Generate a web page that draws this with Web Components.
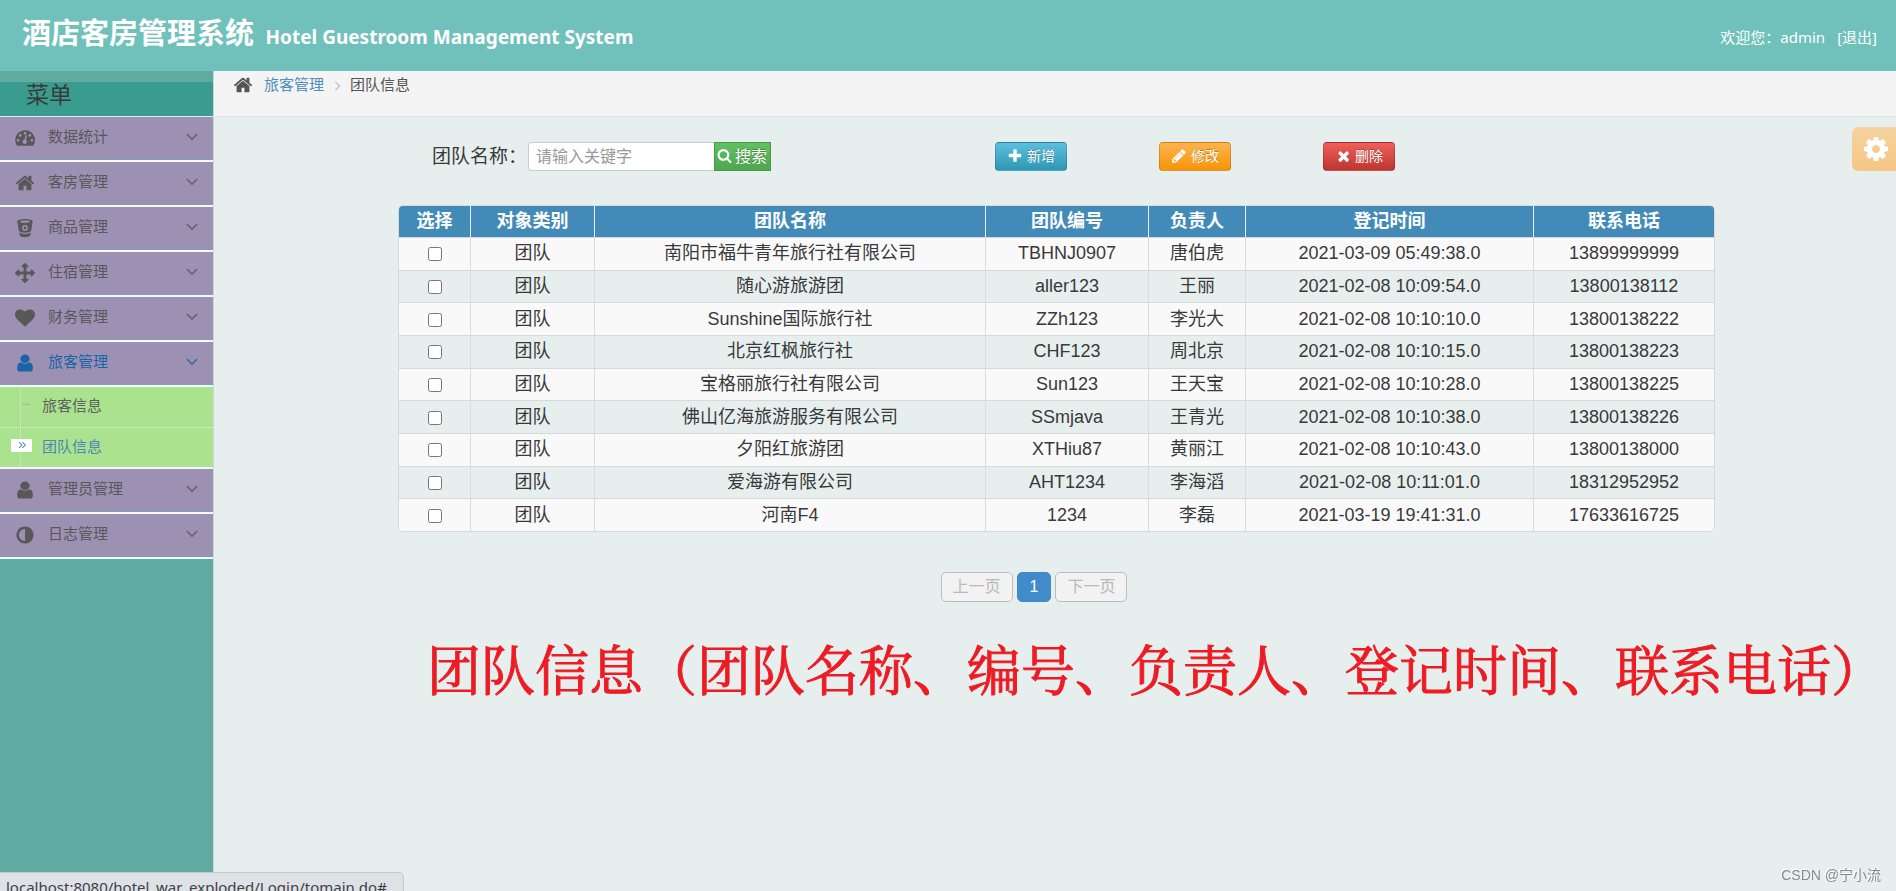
<!DOCTYPE html>
<html lang="zh-CN">
<head>
<meta charset="utf-8">
<title>酒店客房管理系统</title>
<style>
html, body { margin: 0; height: 100%; }
body { font-family: "Liberation Sans", "Noto Sans CJK SC", sans-serif; font-size: 15px; color: #393939; background: #e6efee; }
</style>
</head>
<body>
<hotel-app></hotel-app>
<script>
const ICONS = {
  home: ['0 0 1664 1792', 'M1408 992v480q0 26-19 45t-45 19h-384v-384h-256v384h-384q-26 0-45-19t-19-45v-480q0-1 .5-3t.5-3l575-474 575 474q1 2 1 6zm223-69l-62 74q-8 9-21 11h-3q-13 0-21-7l-692-577-692 577q-12 8-24 7-13-2-21-11l-62-74q-8-10-7-23.5t11-21.5l719-599q32-26 76-26t76 26l244 204v-195q0-14 9-23t23-9h192q14 0 23 9t9 23v408l219 182q10 8 11 21.5t-7 23.5z'],
  dashboard: ['0 0 20 20', 'M10 2.2A9.8 9.8 0 0 0 .2 12c0 2 .6 3.800 1.500 5.300.2.300.5.500.9.500h14.800c.4 0 .7-.2.900-.5A9.800 9.800 0 0 0 10 2.200zM3.100 10.900a1.400 1.400 0 1 1 0 2.800 1.400 1.400 0 0 1 0-2.800zM5.200 6a1.400 1.400 0 1 1 0 2.800 1.400 1.400 0 0 1 0-2.800zM10 3.900a1.400 1.400 0 1 1 0 2.800 1.400 1.400 0 0 1 0-2.800zM14.800 6a1.400 1.400 0 1 1 0 2.800 1.400 1.400 0 0 1 0-2.800zM16.900 10.900a1.400 1.400 0 1 1 0 2.800 1.400 1.400 0 0 1 0-2.800zM11.900 7.400l-.9 4.600a2.200 2.200 0 1 1-1.500-.4l1.100-4.500z'],
  bucket: ['0 0 20 20', 'M10 1C5.500 1 2.200 2.100 2.300 3.600l1.500 9.100c.8 1.300 3.300 2 6.200 2s5.400-.7 6.200-2l1.500-9.100C17.800 2.100 14.500 1 10 1zm0 1.600c2.700 0 4.900.5 4.900 1.100S12.700 4.800 10 4.800s-4.900-.5-4.900-1.100S7.300 2.600 10 2.600zM10 7a2.900 2.900 0 1 1 0 5.800A2.900 2.900 0 0 1 10 7zm0 1.500a1.400 1.400 0 1 0 0 2.800 1.400 1.400 0 0 0 0-2.800zM4.100 14.600l.7 3c.6 1.100 2.800 1.700 5.200 1.700s4.600-.6 5.200-1.700l.7-3c-1.300.9-3.400 1.400-5.900 1.400s-4.600-.5-5.900-1.400z'],
  arrows: ['0 0 1792 1792', 'M1792 896q0 26-19 45l-256 256q-19 19-45 19t-45-19-19-45v-128h-384v384h128q26 0 45 19t19 45-19 45l-256 256q-19 19-45 19t-45-19l-256-256q-19-19-19-45t19-45 45-19h128v-384h-384v128q0 26-19 45t-45 19-45-19l-256-256q-19-19-19-45t19-45l256-256q19-19 45-19t45 19 19 45v128h384v-384h-128q-26 0-45-19t-19-45 19-45l256-256q19-19 45-19t45 19l256 256q19 19 19 45t-19 45-45 19h-128v384h384v-128q0-26 19-45t45-19 45 19l256 256q19 19 19 45z'],
  heart: ['0 0 1792 1792', 'M896 1664q-26 0-44-18l-624-602q-10-8-27.5-26t-55.5-65.5-68-97.5-53.5-121-23.5-138q0-220 127-344t351-124q62 0 126.5 21.5t120 58 95.5 68.5 76 68q36-36 76-68t95.5-68.5 120-58 126.5-21.5q224 0 351 124t127 344q0 221-229 450l-623 600q-18 18-44 18z'],
  user: ['0 0 1792 1792', 'M1600 1399q0 109-62.5 187t-150.5 78h-982q-88 0-150.5-78t-62.500-187q0-85 8.500-160.500t31.500-152 58.500-131 94-89 134.500-34.500q131 128 377 128t377-128q76 0 134.500 34.500t94 89 58.500 131 31.500 152 8.500 160.500zm-288-887q0 159-122 271.500t-294 112.500-294-112.500-122-271.500 122-271.500 294-112.500 294 112.500 122 271.500z'],
  adjust: ['0 0 1792 1792', 'M896 1440v-1088q-148 0-273 73t-198 198-73 273 73 273 198 198 273 73zm768-544q0 209-103 385.500t-279.500 279.500-385.500 103-385.500-103-279.500-279.500-103-385.500 103-385.500 279.500-279.500 385.500-103 385.500 103 279.500 279.500 103 385.500z'],
  search: ['0 0 1792 1792', 'M1216 832q0-185-131.500-316.500t-316.500-131.500-316.500 131.500-131.500 316.500 131.500 316.500 316.500 131.500 316.500-131.500 131.500-316.500zm512 832q0 52-38 90t-90 38q-54 0-90-38l-343-342q-179 124-399 124-143 0-273.500-55.500t-225-150-150-225-55.500-273.500 55.500-273.500 150-225 225-150 273.500-55.500 273.500 55.500 225 150 150 225 55.500 273.500q0 220-124 399l343 343q37 37 37 90z'],
  plus: ['0 0 1792 1792', 'M1600 736v192q0 40-28 68t-68 28h-416v416q0 40-28 68t-68 28h-192q-40 0-68-28t-28-68v-416h-416q-40 0-68-28t-28-68v-192q0-40 28-68t68-28h416v-416q0-40 28-68t68-28h192q40 0 68 28t28 68v416h416q40 0 68 28t28 68z'],
  pencil: ['0 0 1792 1792', 'M491 1536l91-91-235-235-91 91v107h128v128h107zm523-928q0-22-22-22-10 0-17 7l-542 542q-7 7-7 17 0 22 22 22 10 0 17-7l542-542q7-7 7-17zm-54-192l416 416-832 832h-416v-416zm683 96q0 53-37 90l-166 166-416-416 166-165q36-38 90-38 53 0 91 38l235 234q37 39 37 91z'],
  times: ['0 0 1792 1792', 'M1562 1322q0 40-28 68l-136 136q-28 28-68 28t-68-28l-294-294-294 294q-28 28-68 28t-68-28l-136-136q-28-28-28-68t28-68l294-294-294-294q-28-28-28-68t28-68l136-136q28-28 68-28t68 28l294 294 294-294q28-28 68-28t68 28l136 136q28 28 28 68t-28 68l-294 294 294 294q28 28 28 68z'],
  cog: ['0 0 1792 1792', 'M1152 896q0-106-75-181t-181-75-181 75-75 181 75 181 181 75 181-75 75-181zm512-109v222q0 12-8 23t-20 13l-185 28q-19 54-39 91 35 50 107 138 10 12 10 25t-9 23q-27 37-99 108t-94 71q-12 0-26-9l-138-108q-44 23-91 38-16 136-29 186-7 28-36 28h-222q-14 0-24.500-8.500t-11.500-21.500l-28-184q-49-16-90-37l-141 107q-10 9-25 9-14 0-25-11-126-114-165-168-7-10-7-23 0-12 8-23 15-21 51-66.500t54-70.500q-27-50-41-99l-183-27q-13-2-21-12.500t-8-23.500v-222q0-12 8-23t19-13l186-28q14-46 39-92-40-57-107-138-10-12-10-24 0-10 9-23 26-36 98.500-107.500t94.500-71.500q13 0 26 10l138 107q44-23 91-38 16-136 29-186 7-28 36-28h222q14 0 24.500 8.500t11.500 21.500l28 184q49 16 90 37l142-107q9-9 24-9 13 0 25 10 129 119 165 170 7 8 7 22 0 12-8 23-15 21-51 66.500t-54 70.500q26 50 41 98l183 28q13 2 21 12.500t8 23.500z'],
  down: ['0 0 12 12', 'M1.400 2.400L6 7l4.600-4.600 1.100 1.100L6 9.200.3 3.500z'],
  right: ['0 0 12 12', 'M3.600 1.400L8.200 6l-4.600 4.600.9.900L10 6 4.500.5z'],
  double: ['0 0 12 12', 'M1.200 2.100L5 6 1.200 9.900l1 1L7 6 2.200 1.100zM6.200 2.100L10 6 6.200 9.900l1 1L12 6 7.200 1.100z']
};

function define(name, html) {
  const template = document.createElement('template');
  customElements.define(name, class extends HTMLElement {
    constructor() {
      super();
      template.innerHTML = typeof html === 'function' ? html(this) : html;
      this.attachShadow({ mode: 'open' }).append(template.content.cloneNode(true));
    }
  });
}

define('ui-icon', el => {
  const [box, path] = ICONS[el.getAttribute('name')];
  return `<style>
    :host { display: inline-block; flex: none; width: 20px; height: 20px; }
    svg { display: block; width: 100%; height: 100%; fill: currentColor; fill-rule: evenodd; }
  </style><svg viewBox="${box}" aria-hidden="true"><path d="${path}"/></svg>`;
});

define('app-header', `<style>
  :host { display: flex; justify-content: space-between; align-items: center; height: 71px; padding: 0 19px 0 22px; box-sizing: border-box; background: #70c1bb; color: #fff; font-family: "Noto Sans", "Noto Sans CJK SC", sans-serif; }
  h1 { margin: 0; padding-bottom: 2px; font-size: 29px; line-height: 40px; font-weight: 700; }
  small { margin-left: 4px; font-size: 19px; }
  .user { display: flex; gap: 12px; padding-top: 2px; font-size: 15px; line-height: 20px; }
  a { color: inherit; text-decoration: none; }
</style>
<h1>酒店客房管理系统 <small>Hotel Guestroom Management System</small></h1>
<div class="user"><span>欢迎您：admin</span><a href="#">[退出]</a></div>`);

define('menu-group', el => `<style>
  :host { display: block; color: #585858; border-bottom: 2px solid #f4faf8; }
  :host([active]) { color: #1963aa; }
  a { display: flex; align-items: center; height: 43px; box-sizing: border-box; padding: 0 15px; background: #9d91b3; color: inherit; text-decoration: none; border-bottom: 1px solid #7f9fae; }
  span { flex: 1; padding: 0 0 3px 13px; line-height: 20px; }
  ui-icon.chev { width: 12px; height: 12px; padding-bottom: 3px; opacity: .8; }
  ::slotted(*) { border-top: 2px solid #f4faf8; }
</style>
<a href="#"><ui-icon name="${el.getAttribute('icon')}"></ui-icon><span>${el.getAttribute('label')}</span><ui-icon class="chev" name="down"></ui-icon></a><slot></slot>`);

define('sub-menu', `<style>
  :host { display: block; background: #abe28e; }
  ul { list-style: none; margin: 0; padding: 0; background: linear-gradient(90deg, transparent 20px, #cdddc8 20px, #cdddc8 21px, transparent 21px); }
  a { display: flex; align-items: center; height: 40px; box-sizing: border-box; padding: 0 0 5px 11px; color: #616161; text-decoration: none; }
  li + li a { border-top: 1px dotted #e8f4e2; color: #4b88b7; }
  i { width: 21px; margin-right: 10px; display: flex; justify-content: center; align-items: center; }
  .tick::after { content: ""; width: 8px; height: 1px; margin-left: 8px; background: #9db99a; }
  .mark { height: 13px; background: #fff; }
  ui-icon { width: 8px; height: 8px; }
</style>
<ul><li><a href="#"><i class="tick"></i>旅客信息</a></li>
<li><a href="#"><i class="mark"><ui-icon name="double"></ui-icon></i>团队信息</a></li></ul>`);

define('side-menu', `<style>
  :host { display: block; width: 213px; flex: none; background: #5faaa1; border-right: 1px solid #ccd6d5; }
  h2 { margin: 11px 0 0; height: 34px; padding-left: 26px; font-size: 23px; line-height: 26px; font-weight: 400; background: #3a9c8e; border-bottom: 1px solid #dfeeec; }
</style>
<h2>菜单</h2>
<nav>
<menu-group icon="dashboard" label="数据统计"></menu-group>
<menu-group icon="home" label="客房管理"></menu-group>
<menu-group icon="bucket" label="商品管理"></menu-group>
<menu-group icon="arrows" label="住宿管理"></menu-group>
<menu-group icon="heart" label="财务管理"></menu-group>
<menu-group icon="user" label="旅客管理" active><sub-menu></sub-menu></menu-group>
<menu-group icon="user" label="管理员管理"></menu-group>
<menu-group icon="adjust" label="日志管理"></menu-group>
</nav>`);

define('bread-crumb', `<style>
  :host { display: flex; align-items: flex-start; height: 46px; box-sizing: border-box; padding: 4px 0 0 19px; background: #f4f4f4; border-bottom: 1px solid #dde4e3; line-height: 20px; color: #555; }
  a { color: #4c8fbd; text-decoration: none; margin-left: 11px; }
  ui-icon.sep { width: 10px; height: 10px; margin: 6px 8px 0; color: #b2b6bf; }
</style>
<ui-icon name="home"></ui-icon><a href="#">旅客管理</a><ui-icon class="sep" name="right"></ui-icon><span>团队信息</span>`);

define('tool-button', el => `<style>
  :host { display: block; flex: none; width: 72px; }
  button { display: flex; align-items: center; justify-content: center; gap: 4px; width: 100%; height: 29px; padding: 0 0 4px; font: 14px/20px "Noto Sans CJK SC", sans-serif; color: #fff; border: 1px solid rgba(0,0,0,.15); border-radius: 4px; background: var(--tone); text-shadow: 0 -1px 0 rgba(0,0,0,.25); }
  ui-icon { width: 16px; height: 16px; margin-top: 3px; }
</style>
<button type="button"><ui-icon name="${el.getAttribute('icon')}"></ui-icon><slot></slot></button>`);

define('tool-bar', `<style>
  :host { display: flex; align-items: center; padding-left: 34px; }
  form { display: flex; align-items: center; width: 339px; margin-right: 224px; }
  label { font-size: 19px; line-height: 28px; width: 96px; white-space: nowrap; flex: none; }
  input { flex: 1; min-width: 0; height: 29px; box-sizing: border-box; border: 1px solid #ccc; border-right: 0; border-radius: 4px 0 0 4px; padding: 0 7px 4px; font: 16px/20px "Noto Sans CJK SC", sans-serif; background: #fff; }
  input::placeholder { color: #999; }
  form button { display: flex; align-items: center; gap: 3px; width: 57px; height: 29px; padding: 0 2px 4px; font: 16px/20px "Noto Sans CJK SC", sans-serif; white-space: nowrap; color: #fff; background: linear-gradient(#61c161, #4fa64f); border: 1px solid #479a47; text-shadow: 0 -1px 0 rgba(0,0,0,.25); }
  form ui-icon { width: 15px; height: 15px; margin-top: 2px; }
  .acts { display: flex; gap: 92px; }
  .add { --tone: linear-gradient(#5bc0de, #2f96b4); }
  .edit { --tone: linear-gradient(#fbb450, #f89406); }
  .del { --tone: linear-gradient(#ee5f5b, #bd362f); }
</style>
<form onsubmit="return false"><label for="kw">团队名称：</label><input id="kw" type="text" placeholder="请输入关键字"><button type="submit"><ui-icon name="search"></ui-icon>搜索</button></form>
<div class="acts"><tool-button class="add" icon="plus">新增</tool-button><tool-button class="edit" icon="pencil">修改</tool-button><tool-button class="del" icon="times">删除</tool-button></div>`);

const TEAMS = [
  ['南阳市福牛青年旅行社有限公司', 'TBHNJ0907', '唐伯虎', '2021-03-09 05:49:38.0', '13899999999'],
  ['随心游旅游团', 'aller123', '王丽', '2021-02-08 10:09:54.0', '13800138112'],
  ['Sunshine国际旅行社', 'ZZh123', '李光大', '2021-02-08 10:10:10.0', '13800138222'],
  ['北京红枫旅行社', 'CHF123', '周北京', '2021-02-08 10:10:15.0', '13800138223'],
  ['宝格丽旅行社有限公司', 'Sun123', '王天宝', '2021-02-08 10:10:28.0', '13800138225'],
  ['佛山亿海旅游服务有限公司', 'SSmjava', '王青光', '2021-02-08 10:10:38.0', '13800138226'],
  ['夕阳红旅游团', 'XTHiu87', '黄丽江', '2021-02-08 10:10:43.0', '13800138000'],
  ['爱海游有限公司', 'AHT1234', '李海滔', '2021-02-08 10:11:01.0', '18312952952'],
  ['河南F4', '1234', '李磊', '2021-03-19 19:41:31.0', '17633616725']
];

define('team-table', () => `<style>
  :host { display: block; }
  table { width: 100%; height: 327px; table-layout: fixed; border-collapse: separate; border-spacing: 0; border: 1px solid #d5d9d8; border-radius: 5px; overflow: hidden; font-size: 18px; line-height: 24px; text-align: center; }
  th, td { padding: 0; border-left: 1px solid #d9dddc; border-top: 1px solid #d5d9d8; white-space: nowrap; }
  th { height: 31px; padding-bottom: 1px; box-sizing: border-box; font-weight: 700; color: #fff; background: #428bb9; border-top: 0; border-left-color: #e4ecf0; }
  td { padding-bottom: 1px; }
  th:first-child, td:first-child { border-left: 0; }
  tbody tr:nth-child(odd) td { background: #f9f9f9; }
  input { display: block; width: 14px; height: 14px; margin: 2px auto 0; }
</style>
<table>
<colgroup><col style="width:71px"><col style="width:124px"><col style="width:391px"><col style="width:163px"><col style="width:97px"><col style="width:288px"><col style="width:181px"></colgroup>
<thead><tr>${['选择', '对象类别', '团队名称', '团队编号', '负责人', '登记时间', '联系电话'].map(t => `<th scope="col">${t}</th>`).join('')}</tr></thead>
<tbody>${TEAMS.map(r => `<tr><td><input type="checkbox" aria-label="${r[0]}"></td><td>团队</td>${r.map(c => `<td>${c}</td>`).join('')}</tr>`).join('')}</tbody>
</table>`);

define('page-nav', `<style>
  :host { display: flex; justify-content: center; gap: 4px; }
  button { height: 30px; box-sizing: border-box; padding: 0 11px 1px; font: 16px/24px "Liberation Sans", "Noto Sans CJK SC", sans-serif; border-radius: 5px; color: #b9b9b9; background: #f2f2f2; border: 1px solid #bdbdbd; }
  .now { padding: 0 12px 1px; color: #fff; background: #428bca; border-color: #428bca; }
</style>
<button type="button" disabled>上一页</button><button type="button" class="now">1</button><button type="button" disabled>下一页</button>`);

define('settings-tab', `<style>
  :host { display: block; }
  button { display: flex; align-items: center; justify-content: center; width: 44px; height: 44px; padding: 0 0 0 3px; border: 0; border-radius: 6px 0 0 6px; background: linear-gradient(#f6d3a0, #f5c684); color: #fff; }
  ui-icon { width: 28px; height: 28px; }
</style><button type="button" aria-label="设置"><ui-icon name="cog"></ui-icon></button>`);

define('hotel-app', `<style>
  :host { display: flex; flex-direction: column; min-height: 100%; }
  .body { display: flex; flex: 1; }
  main { flex: 1; min-width: 0; position: relative; }
  .content { padding: 25px 181px 0 184px; }
  team-table { margin-top: 34px; }
  page-nav { margin: 40px 45px 0 0; }
  settings-tab { position: absolute; right: 0; top: 56px; }
  .note { margin: 26px 0 0 29px; font: 54px/80px "Noto Serif CJK SC", "Noto Sans CJK SC", serif; color: #ed1c24; -webkit-text-stroke: 1px #ed1c24; white-space: nowrap; width: 0; }
  .status { position: fixed; left: 0; bottom: -9px; height: 26px; padding: 0 16px 0 6px; border: 1px solid #c5c9cc; border-left: 0; border-radius: 0 5px 0 0; background: #dee1e6; color: #3c4043; font: 15px/28px "Noto Sans", sans-serif; }
  .mark { position: fixed; right: 15px; bottom: 6px; font: 14px/20px "Liberation Sans", "Noto Sans CJK SC", sans-serif; color: #858a8a; text-shadow: -1px -1px 0 #fff; }
</style>
<app-header></app-header>
<div class="body">
<side-menu></side-menu>
<main><bread-crumb></bread-crumb><settings-tab></settings-tab>
<div class="content"><tool-bar></tool-bar><team-table></team-table><page-nav></page-nav>
<p class="note">团队信息（团队名称、编号、负责人、登记时间、联系电话）</p></div></main>
</div>
<div class="status">localhost:8080/hotel_war_exploded/Login/tomain.do#</div>
<div class="mark">CSDN @宁小流</div>`);
</script>
</body>
</html>
